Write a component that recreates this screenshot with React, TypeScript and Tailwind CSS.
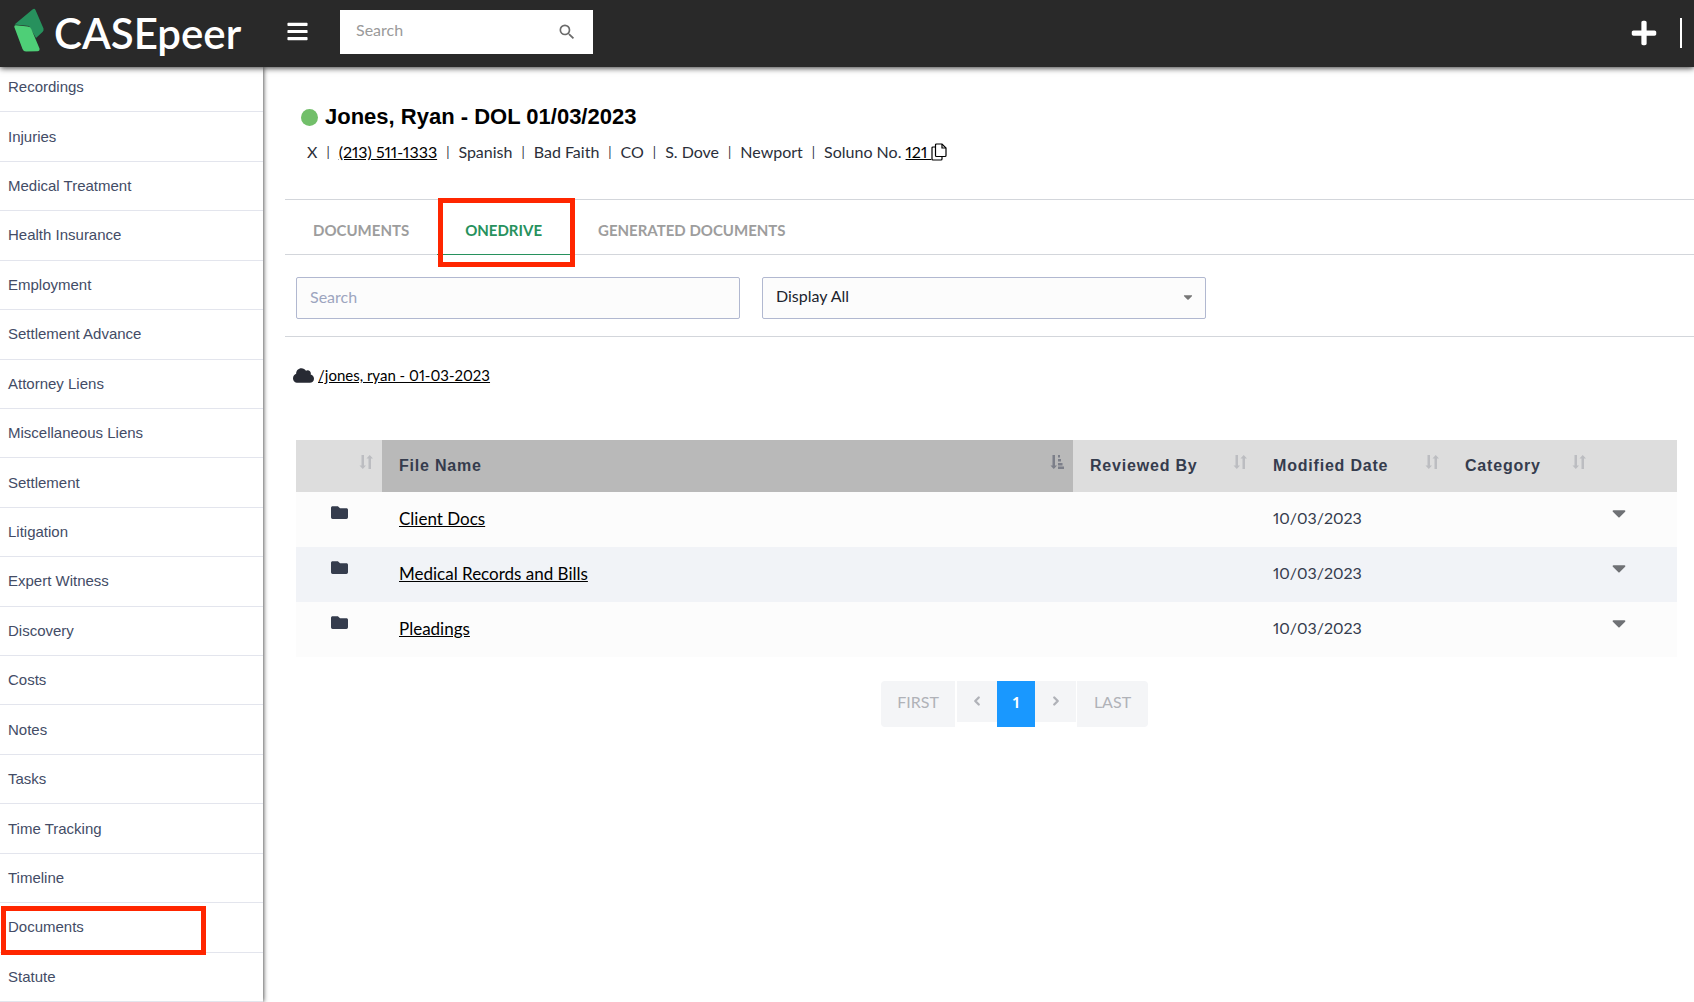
import React, { useState } from 'react';
import { FaBars, FaCaretDown, FaCloud, FaFolder, FaPlus } from 'react-icons/fa';
import { MdSearch } from 'react-icons/md';
import { ChevronLeft, ChevronRight } from 'lucide-react';

const SIDEBAR_ITEMS = [
  'Recordings',
  'Injuries',
  'Medical Treatment',
  'Health Insurance',
  'Employment',
  'Settlement Advance',
  'Attorney Liens',
  'Miscellaneous Liens',
  'Settlement',
  'Litigation',
  'Expert Witness',
  'Discovery',
  'Costs',
  'Notes',
  'Tasks',
  'Time Tracking',
  'Timeline',
  'Documents',
  'Statute',
];

const TABS = ['Documents', 'OneDrive', 'Generated Documents'];

const FILES = [
  { name: 'Client Docs', modified: '10/03/2023' },
  { name: 'Medical Records and Bills', modified: '10/03/2023' },
  { name: 'Pleadings', modified: '10/03/2023' },
];

const Logo = () => (
  <a href="#" className="flex items-center text-white">
    <svg width="30" height="44" viewBox="0 0 30 44" aria-hidden="true">
      <path d="M.5 16.500 18.500 1.500Q20.500 0 21.500 2L29.500 20.500Q30 22.500 28.500 24L22 30 15 18Z" fill="#27915d" />
      <path d="M.3 19Q0 17 2 17.300L14 18.500Q16.500 18.800 17.300 21L25.500 40.500Q26 43 23.500 43.200L12 43.500Q9.500 43.500 8.500 41Z" fill="#4ecf77" />
    </svg>
    <span className="ml-[10px] pt-1.5 font-[Lato,sans-serif] text-[42px] leading-[38px] font-semibold">CASEpeer</span>
  </a>
);

const CopyIcon = () => (
  <svg width="16" height="18" viewBox="0 0 16 18" fill="none" stroke="currentColor" strokeWidth="1.2" aria-hidden="true">
    <path d="M5.500 1H11L15 5V12.500Q15 13.500 14 13.500H5.500Q4.500 13.500 4.500 12.500V2Q4.500 1 5.500 1Z" />
    <path d="M11 1V5H15" />
    <path d="M4.500 4H2Q1 4 1 5V16Q1 17 2 17H10Q11 17 11 16V13.500" />
  </svg>
);

const SortIcon = ({ active = false }: { active?: boolean }) => (
  <svg width="14" height="14" viewBox="0 0 14 14" aria-hidden="true" className={active ? 'text-[#7c7f89]' : 'text-[#bcbdc1]'}>
    <path d="M2.500 0h2.500v10.500h2L3.800 14 .5 10.500h2z" fill="currentColor" />
    {active ? (
      <path d="M8 0h2v2.500H8zM8 4h3v2.500H8zM8 8h4.500v2.500H8zM8 11.500h6v2.500H8z" fill="currentColor" />
    ) : (
      <path d="M9.500 14h2.500V3.500h2L10.700 0 7.500 3.500H9.500z" fill="currentColor" />
    )}
  </svg>
);

const HeaderCell = ({ label, active = false, className = '' }: { label: string; active?: boolean; className?: string }) => (
  <th className={`h-[52px] p-0 pl-[17px] text-left ${active ? 'bg-[#b9b9b9]' : ''} ${className}`}>
    <button
      aria-label={label || 'Type'}
      className="flex w-full items-center justify-between pr-[9px] font-[Liberation_Sans,sans-serif] text-base font-bold tracking-wider text-[#353c4d]"
    >
      <span>{label}</span>
      <span className="pb-[9px]">
        <SortIcon active={active} />
      </span>
    </button>
  </th>
);

const Header = () => (
  <header className="relative z-10 flex h-[67px] items-center bg-[#292929] pl-[14px] shadow-[0_1px_6px_rgba(0,0,0,0.8)]">
    <div className="w-[272px] pb-2">
      <Logo />
    </div>
    <button aria-label="Toggle menu" className="pb-1 text-white">
      <FaBars size={23} />
    </button>
    <form className="mb-1 ml-[31px] flex h-11 w-[253px] items-center bg-white px-4">
      <input aria-label="Search cases" placeholder="Search" className="min-w-0 flex-1 pb-[3px] text-base text-gray-700 outline-none placeholder:text-[#9a9a9a]" />
      <button type="button" aria-label="Search" className="text-[#6b6b6b]">
        <MdSearch size={20} />
      </button>
    </form>
    <div className="ml-auto flex items-center gap-[22px] pr-3 pb-[2px]">
      <button aria-label="Add" className="text-white">
        <FaPlus size={28} />
      </button>
      <span className="h-[30px] w-0.5 bg-white" />
    </div>
  </header>
);

const Sidebar = () => (
  <nav className="flex w-[263px] shrink-0 flex-col bg-white shadow-[0_0_5px_rgba(0,0,0,0.9)]">
    <ul className="-mt-1 flex flex-1 flex-col">
      {SIDEBAR_ITEMS.map(item => (
        <li key={item} className="relative flex flex-1 items-center border-b border-[#e3e5ed]">
          <a href="#" className="w-full py-3 pl-2 font-[Liberation_Sans,sans-serif] text-[15px] leading-6 text-[#434c66]">
            {item}
          </a>
          {item === 'Documents' && (
            <span className="pointer-events-none absolute top-[3px] left-px h-[49px] w-[205px] border-5 border-[#ff2600]" />
          )}
        </li>
      ))}
    </ul>
  </nav>
);

const Separator = () => <span className="mx-[9px] text-[13px]">|</span>;

const CaseHeader = () => (
  <div className="px-4 pt-[34px]">
    <h1 className="flex items-center gap-[7px] font-[Liberation_Sans,sans-serif] text-[22px] leading-8 font-bold text-black">
      <span className="size-[17px] rounded-full bg-[#72bf6a]" />
      Jones, Ryan - DOL 01/03/2023
    </h1>
    <p className="mt-[7px] flex items-center pl-[6px] text-base leading-6 text-[#2b2f3a]">
      X<Separator />
      <a href="#" className="text-black underline">(213) 511-1333</a>
      <Separator />Spanish<Separator />Bad Faith<Separator />CO<Separator />S. Dove<Separator />Newport<Separator />
      <span>Soluno No.&nbsp;</span>
      <a href="#" className="flex items-center text-black underline">
        121&nbsp;<CopyIcon />
      </a>
    </p>
  </div>
);

const Pagination = () => (
  <nav aria-label="Pages" className="mt-6 flex items-start justify-center pl-14 text-base text-[#b0b2b8]">
    <button className="mr-0.5 h-[46px] w-[74px] rounded-l-sm bg-[#f4f5f7] pb-1">FIRST</button>
    <button aria-label="Previous" className="flex h-[41px] w-10 items-center justify-center bg-[#f4f5f7] pb-0.5">
      <ChevronLeft size={14} strokeWidth={4} />
    </button>
    <button aria-current="page" className="h-[46px] w-[38px] bg-[#1998ff] pb-1 font-bold text-white">1</button>
    <button aria-label="Next" className="flex h-[41px] w-[41px] items-center justify-center bg-[#f4f5f7] pb-0.5">
      <ChevronRight size={14} strokeWidth={4} />
    </button>
    <button className="ml-px h-[46px] w-[71px] rounded-r-sm bg-[#f4f5f7] pb-1">LAST</button>
  </nav>
);

export default function App() {
  const [activeTab, setActiveTab] = useState('OneDrive');

  return (
    <div className="flex min-h-screen flex-col bg-white font-[Lato,sans-serif] proportional-nums">
      <Header />
      <div className="flex flex-1">
        <Sidebar />
        <main className="min-w-0 flex-1 pl-[22px]">
          <CaseHeader />

          {/* Tabs */}
          <div className="mt-[35px] flex h-14 border-y border-[#d3d6db]">
            {TABS.map(tab => (
              <button
                key={tab}
                onClick={() => setActiveTab(tab)}
                className={`relative px-7 pt-1.5 text-[15px] font-bold uppercase ${
                  activeTab === tab ? 'text-[#27915d]' : 'text-[#9d9d9d]'
                }`}
              >
                {tab}
                {activeTab === tab && <span className="absolute inset-x-0 -bottom-px h-px bg-[#27915d]" />}
                {tab === 'OneDrive' && (
                  <span className="pointer-events-none absolute -top-0.5 -right-[5px] -bottom-[13px] left-px border-5 border-[#ff2600]" />
                )}
              </button>
            ))}
          </div>

          {/* Filters */}
          <div className="flex gap-[22px] border-b border-[#d3d6db] px-[11px] pt-[22px] pb-[17px]">
            <input
              aria-label="Search files"
              placeholder="Search"
              className="h-[42px] w-[444px] rounded-xs border border-[#b1b8d0] bg-[#fcfcfc] px-[13px] pb-1 text-base outline-none placeholder:text-[#9da5bf]"
            />
            <div className="relative w-[444px]">
              <select aria-label="Display" className="h-[42px] w-full appearance-none rounded-xs border border-[#b1b8d0] bg-[#fcfcfc] px-[13px] pb-1 text-base text-[#20242e] outline-none">
                <option>Display All</option>
              </select>
              <FaCaretDown size={14} className="pointer-events-none absolute top-[13px] right-[11px] text-[#777]" />
            </div>
          </div>

          <div className="mt-[26px] flex items-center gap-1 pl-2 text-[15px] leading-6">
            <FaCloud size={21} className="text-[#272a33]" />
            <a href="#" className="text-black underline">/jones, ryan - 01-03-2023</a>
          </div>

          <div className="pt-[53px] pr-[17px] pl-[11px]">
            <table className="w-full table-fixed border-collapse text-base text-[#353c4d]">
              <thead className="bg-[#ddd]">
                <tr>
                  <HeaderCell label="" className="w-[86px]" />
                  <HeaderCell label="File Name" active />
                  <HeaderCell label="Reviewed By" className="w-[183px]" />
                  <HeaderCell label="Modified Date" className="w-[192px]" />
                  <HeaderCell label="Category" className="w-[147px]" />
                  <th className="w-[82px]" />
                </tr>
              </thead>
              <tbody>
                {FILES.map(file => (
                  <tr key={file.name} className="h-[55px] bg-[#fcfcfc] even:bg-[#f1f3f7]">
                    <td className="pb-[14px]">
                      <FaFolder size={17} className="mx-auto" />
                    </td>
                    <td className="pb-[2px] pl-[17px] text-[17px] leading-6">
                      <a href="#" className="text-black underline">{file.name}</a>
                    </td>
                    <td />
                    <td className="pb-[3px] pl-[17px]">{file.modified}</td>
                    <td />
                    <td className="pb-[14px]">
                      <button aria-label={`Actions for ${file.name}`} className="block pl-[13px] text-[#6f7175]">
                        <FaCaretDown size={22} />
                      </button>
                    </td>
                  </tr>
                ))}
              </tbody>
            </table>

            <Pagination />
          </div>
        </main>
      </div>
    </div>
  );
}
